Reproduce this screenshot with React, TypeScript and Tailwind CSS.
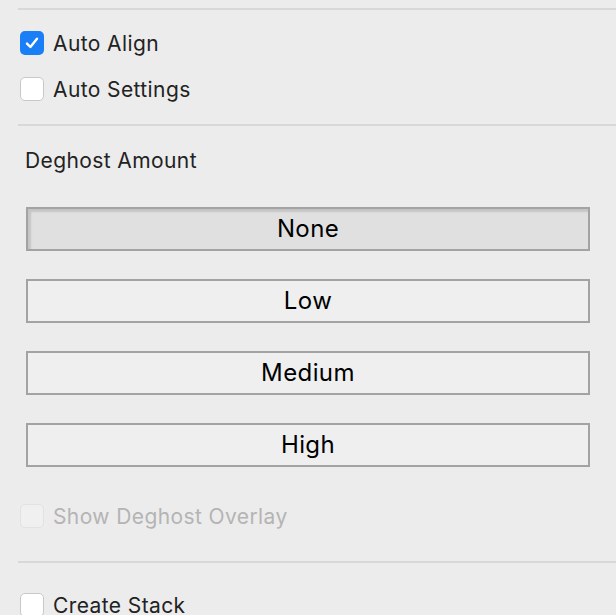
import { useState } from "react";

const font = { fontFamily: "Inter, 'Noto Sans', sans-serif" };

function Checkbox({
  checked,
  disabled,
  label,
  onChange,
}: {
  checked: boolean;
  disabled?: boolean;
  label: string;
  onChange?: () => void;
}) {
  return (
    <label className="flex h-6 items-center gap-[9px]">
      <button
        type="button"
        disabled={disabled}
        onClick={onChange}
        className={
          checked
            ? "flex h-6 w-6 items-center justify-center rounded-[5px] bg-[#1a7ef6]"
            : disabled
              ? "h-6 w-6 rounded-[5px] border border-[#e2e2e2] bg-[#f0f0f0]"
              : "h-6 w-6 rounded-[5px] border border-[#c8c8c8] bg-white"
        }
      >
        {checked ? (
          <svg width="16" height="16" viewBox="0 0 16 16" fill="none">
            <path
              d="M3 8.6 L6.4 12 L13 3.8"
              stroke="white"
              strokeWidth="2.4"
              strokeLinecap="round"
              strokeLinejoin="round"
            />
          </svg>
        ) : null}
      </button>
      <span
        className={`text-[21px] leading-none tracking-[0.4px] ${disabled ? "text-[#b4b4b4]" : "text-[#222]"}`}
      >
        {label}
      </span>
    </label>
  );
}

const AMOUNTS = ["None", "Low", "Medium", "High"] as const;

export default function App() {
  const [autoAlign, setAutoAlign] = useState(true);
  const [autoSettings, setAutoSettings] = useState(false);
  const [amount, setAmount] = useState<(typeof AMOUNTS)[number]>("None");
  const [createStack, setCreateStack] = useState(false);

  return (
    <div className="h-[615px] w-[616px] overflow-hidden bg-[#ececec]" style={font}>
      <div className="pt-[8px] pl-[18px]">
        <div className="h-[2px] bg-[#d8d8d8]" />
      </div>

      <div className="flex flex-col gap-[22px] pt-[21px] pl-[20px]">
        <Checkbox checked={autoAlign} label="Auto Align" onChange={() => setAutoAlign(!autoAlign)} />
        <Checkbox
          checked={autoSettings}
          label="Auto Settings"
          onChange={() => setAutoSettings(!autoSettings)}
        />
      </div>

      <div className="pt-[23px] pl-[18px]">
        <div className="h-[2px] bg-[#d8d8d8]" />
      </div>

      <p className="pt-[24px] pl-[25px] text-[21px] leading-none tracking-[0.4px] text-[#222]">
        Deghost Amount
      </p>

      <div className="flex flex-col gap-[28px] pt-[36px] pl-[26px] pr-[26px]">
        {AMOUNTS.map((a) => (
          <button
            key={a}
            type="button"
            onClick={() => setAmount(a)}
            className={
              amount === a
                ? "h-[44px] border-2 border-[#a3a3a3] bg-[#e0e0e0] text-[24px] tracking-[0.4px] text-black shadow-[inset_3px_3px_2px_rgba(0,0,0,0.12)]"
                : "h-[44px] border-2 border-[#a3a3a3] bg-[#efefef] text-[24px] tracking-[0.4px] text-black"
            }
          >
            {a}
          </button>
        ))}
      </div>

      <div className="pt-[37px] pl-[20px]">
        <Checkbox checked={false} disabled label="Show Deghost Overlay" />
      </div>

      <div className="pt-[33px] pl-[18px]">
        <div className="h-[2px] bg-[#d8d8d8]" />
      </div>

      <div className="pt-[30px] pl-[20px]">
        <Checkbox
          checked={createStack}
          label="Create Stack"
          onChange={() => setCreateStack(!createStack)}
        />
      </div>
    </div>
  );
}
